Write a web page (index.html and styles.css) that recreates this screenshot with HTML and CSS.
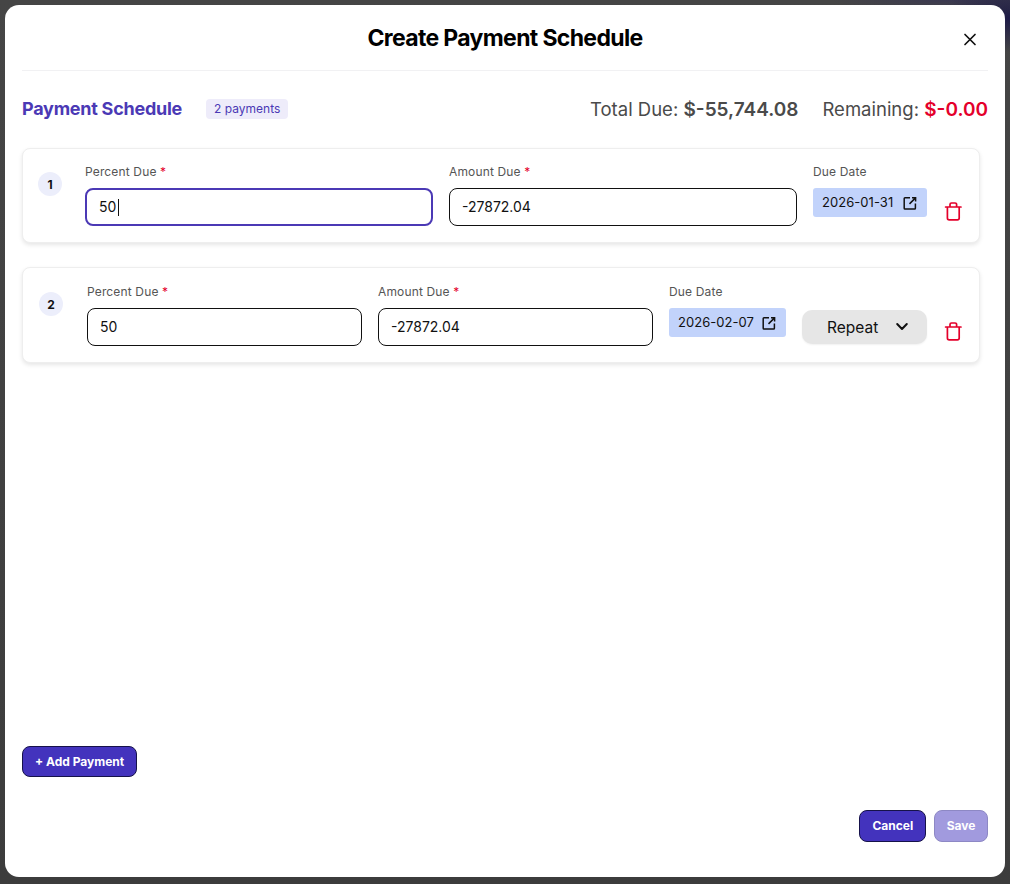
FILE: index.html
```html
<!DOCTYPE html>
<html lang="en">
<head>
<meta charset="utf-8">
<title>Create Payment Schedule</title>
<link rel="stylesheet" href="styles.css">
</head>
<body>
<div class="modal">
  <header class="modal-header">
    <h1 class="modal-title">Create Payment Schedule</h1>
    <button class="close-btn" aria-label="Close">
      <svg width="20" height="20" viewBox="0 0 20 20" fill="none" stroke="#111" stroke-width="1.7" stroke-linecap="round"><path d="M5 5.500l10 10M15 5.500L5 15.500"/></svg>
    </button>
  </header>
  <section class="summary">
    <div class="summary-left">
      <h2 class="summary-title">Payment Schedule</h2>
      <span class="count">2 payments</span>
    </div>
    <div class="summary-right">
      <span>Total Due: <b>$-55,744.08</b></span>
      <span>Remaining: <b class="danger">$-0.00</b></span>
    </div>
  </section>
  <div class="cards">
    <article class="card card-first">
      <span class="num">1</span>
      <div class="field field-grow">
        <label class="label">Percent Due <i>*</i></label>
        <div class="input input-focus">50<span class="caret"></span></div>
      </div>
      <div class="field field-grow">
        <label class="label">Amount Due <i>*</i></label>
        <div class="input">-27872.04</div>
      </div>
      <div class="field">
        <label class="label">Due Date</label>
        <div class="date">2026-01-31
          <svg class="ext" width="16" height="16" viewBox="0 0 16 16" fill="none" stroke="#111" stroke-width="1.5"><path d="M8 2.800H3a.8.8 0 0 0-.8.8v9.600a.8.8 0 0 0 .8.8h9.600a.8.8 0 0 0 .8-.8V8.500"/><path d="M10 2.800h3.600v3.600M13.500 2.900L7.500 8.900"/></svg>
        </div>
      </div>
      <button class="trash" aria-label="Delete">
        <svg width="20" height="20" viewBox="0 0 20 20" fill="none" stroke="#e4002b" stroke-width="1.7" stroke-linecap="round" stroke-linejoin="round"><path d="M2.600 6H18M7 6V3.500A1.500 1.500 0 0 1 8.500 2h3.600a1.500 1.500 0 0 1 1.500 1.500V6M4.400 6v11a1.800 1.800 0 0 0 1.800 1.800h8.200a1.800 1.800 0 0 0 1.800-1.800V6"/></svg>
      </button>
    </article>
    <article class="card">
      <span class="num">2</span>
      <div class="field field-grow">
        <label class="label">Percent Due <i>*</i></label>
        <div class="input">50</div>
      </div>
      <div class="field field-grow">
        <label class="label">Amount Due <i>*</i></label>
        <div class="input">-27872.04</div>
      </div>
      <div class="field">
        <label class="label">Due Date</label>
        <div class="date">2026-02-07
          <svg class="ext" width="16" height="16" viewBox="0 0 16 16" fill="none" stroke="#111" stroke-width="1.5"><path d="M8 2.800H3a.8.8 0 0 0-.8.8v9.600a.8.8 0 0 0 .8.8h9.600a.8.8 0 0 0 .8-.8V8.500"/><path d="M10 2.800h3.600v3.600M13.500 2.900L7.500 8.900"/></svg>
        </div>
      </div>
      <button class="repeat">Repeat
        <svg width="16" height="16" viewBox="0 0 16 16" fill="none" stroke="#111" stroke-width="2" stroke-linecap="round" stroke-linejoin="round"><path d="M3.200 5l4.800 5 4.800-5"/></svg>
      </button>
      <button class="trash" aria-label="Delete">
        <svg width="20" height="20" viewBox="0 0 20 20" fill="none" stroke="#e4002b" stroke-width="1.7" stroke-linecap="round" stroke-linejoin="round"><path d="M2.600 6H18M7 6V3.500A1.500 1.500 0 0 1 8.500 2h3.600a1.500 1.500 0 0 1 1.500 1.500V6M4.400 6v11a1.800 1.800 0 0 0 1.800 1.800h8.200a1.800 1.800 0 0 0 1.800-1.800V6"/></svg>
      </button>
    </article>
  </div>
  <div class="add-row"><button class="btn">+ Add Payment</button></div>
  <footer class="footer">
    <button class="btn btn-footer">Cancel</button>
    <button class="btn btn-footer btn-disabled">Save</button>
  </footer>
</div>
</body>
</html>
```
FILE: styles.css
```css
* { box-sizing: border-box; }
html, body { height: 100%; }
body {
  margin: 0;
  padding: 5px 5px 7px;
  background:
    radial-gradient(ellipse 70px 34px at 1010px 18px, #1d1a48, rgba(29,26,72,0)),
    radial-gradient(ellipse 120px 10px at 950px 0, #3a3850, rgba(58,56,80,0)),
    linear-gradient(#454545, #3c3c3c);
  font-family: Inter, "Liberation Sans", sans-serif;
  color: #111;
  overflow: hidden;
}
.modal {
  height: 872px;
  background: #fff;
  border-radius: 14px;
  padding: 0 17px;
  display: flex;
  flex-direction: column;
}
.modal-header {
  height: 66px;
  border-bottom: 1px solid #f1f1f3;
  position: relative;
  display: flex;
  align-items: center;
  justify-content: center;
}
.modal-title {
  margin: 0;
  font-size: 23px;
  font-weight: 700;
  letter-spacing: -0.65px;
  color: #000;
}
.close-btn {
  position: absolute;
  right: 8px;
  top: 24px;
  width: 20px;
  height: 20px;
  padding: 0;
  border: 0;
  background: none;
  display: block;
}
.close-btn svg { display: block; }
.summary {
  display: flex;
  justify-content: space-between;
  align-items: center;
  height: 26px;
  margin-top: 25px;
}
.summary-left { display: flex; align-items: center; gap: 24px; }
.summary-title {
  margin: 0 0 1px;
  font-size: 18px;
  font-weight: 700;
  letter-spacing: -0.25px;
  color: #4b39b5;
}
.count {
  background: #eeecfa;
  color: #4b39b5;
  font-size: 12px;
  line-height: 20px;
  padding: 0 8px;
  border-radius: 4px;
}
.summary-right {
  display: flex;
  gap: 24px;
  font-size: 18.5px;
  color: #4a4a4a;
}
.summary-right b { font-size: 19px; font-weight: 600; }
.danger { color: #e4002b; }
.cards {
  margin-top: 26px;
  width: 958px;
  display: flex;
  flex-direction: column;
  gap: 24px;
}
.card {
  height: 96px;
  background: #fff;
  border: 1px solid #eeeeee;
  border-radius: 8px;
  box-shadow: 0 2px 4px rgba(0,0,0,.1);
  display: flex;
  align-items: flex-start;
  gap: 16px;
  padding: 16px 16px 0 16px;
}
.card-first { height: 95px; padding-top: 15px; }
.num {
  width: 24px;
  height: 24px;
  border-radius: 50%;
  background: #eceefb;
  font-size: 12px;
  font-weight: 700;
  color: #111;
  display: flex;
  align-items: center;
  justify-content: center;
  margin-top: 8px;
  margin-right: 8px;
  flex: none;
}
.card-first .num { margin-right: 7px; margin-left: -1px; }
.field { display: flex; flex-direction: column; flex: none; }
.field-grow { flex: 1 1 0; min-width: 0; }
.label {
  font-size: 12px;
  line-height: 16px;
  color: #555;
  letter-spacing: .15px;
  margin-bottom: 8px;
  font-weight: 400;
}
.label i { color: #e4002b; font-style: normal; }
.input {
  height: 38px;
  border: 1px solid #111;
  border-radius: 8px;
  background: #fff;
  font-size: 14px;
  line-height: 36px;
  padding: 0 12px;
  color: #111;
  display: flex;
  align-items: center;
}
.input-focus { border: 2px solid #4b39b5; padding: 0 12px; }
.caret { width: 1px; height: 17px; background: #111; margin-left: 2px; }
.date {
  width: 114px;
  height: 29px;
  background: #c2d3fb;
  border-radius: 3px;
  font-size: 13px;
  letter-spacing: .05px;
  color: #111;
  display: flex;
  align-items: center;
  padding: 0 9px 2px;
  justify-content: space-between;
}
.card:not(.card-first) .date { width: 117px; }
.ext { flex: none; margin-bottom: -2px; }
.repeat {
  width: 125px;
  height: 34px;
  margin-top: 26px;
  border: 0;
  border-radius: 10px;
  background: #e6e6e6;
  font: 400 15.5px Inter, "Liberation Sans", sans-serif;
  color: #111;
  display: flex;
  align-items: center;
  justify-content: flex-start;
  gap: 16px;
  padding: 0 0 0 25px;
  box-shadow: 0 1px 2px rgba(0,0,0,.06);
}
.trash {
  width: 20px;
  height: 20px;
  border: 0;
  padding: 0;
  background: none;
  margin-top: 37px;
  flex: none;
}
.trash svg { display: block; }
.add-row { margin-top: auto; }
.btn {
  height: 31px;
  padding: 0 12px 1px;
  background: #4333bd;
  border: 1px solid #16124a;
  border-radius: 8px;
  color: #fff;
  font: 700 12px Inter, "Liberation Sans", sans-serif;
}
.footer {
  display: flex;
  justify-content: flex-end;
  gap: 8px;
  margin-top: 33px;
  margin-bottom: 35px;
}
.btn-footer { height: 32px; }
.btn-disabled {
  background: #a19ade;
  border-color: #8d88c4;
  padding: 0 11.5px 1px;
}
```
